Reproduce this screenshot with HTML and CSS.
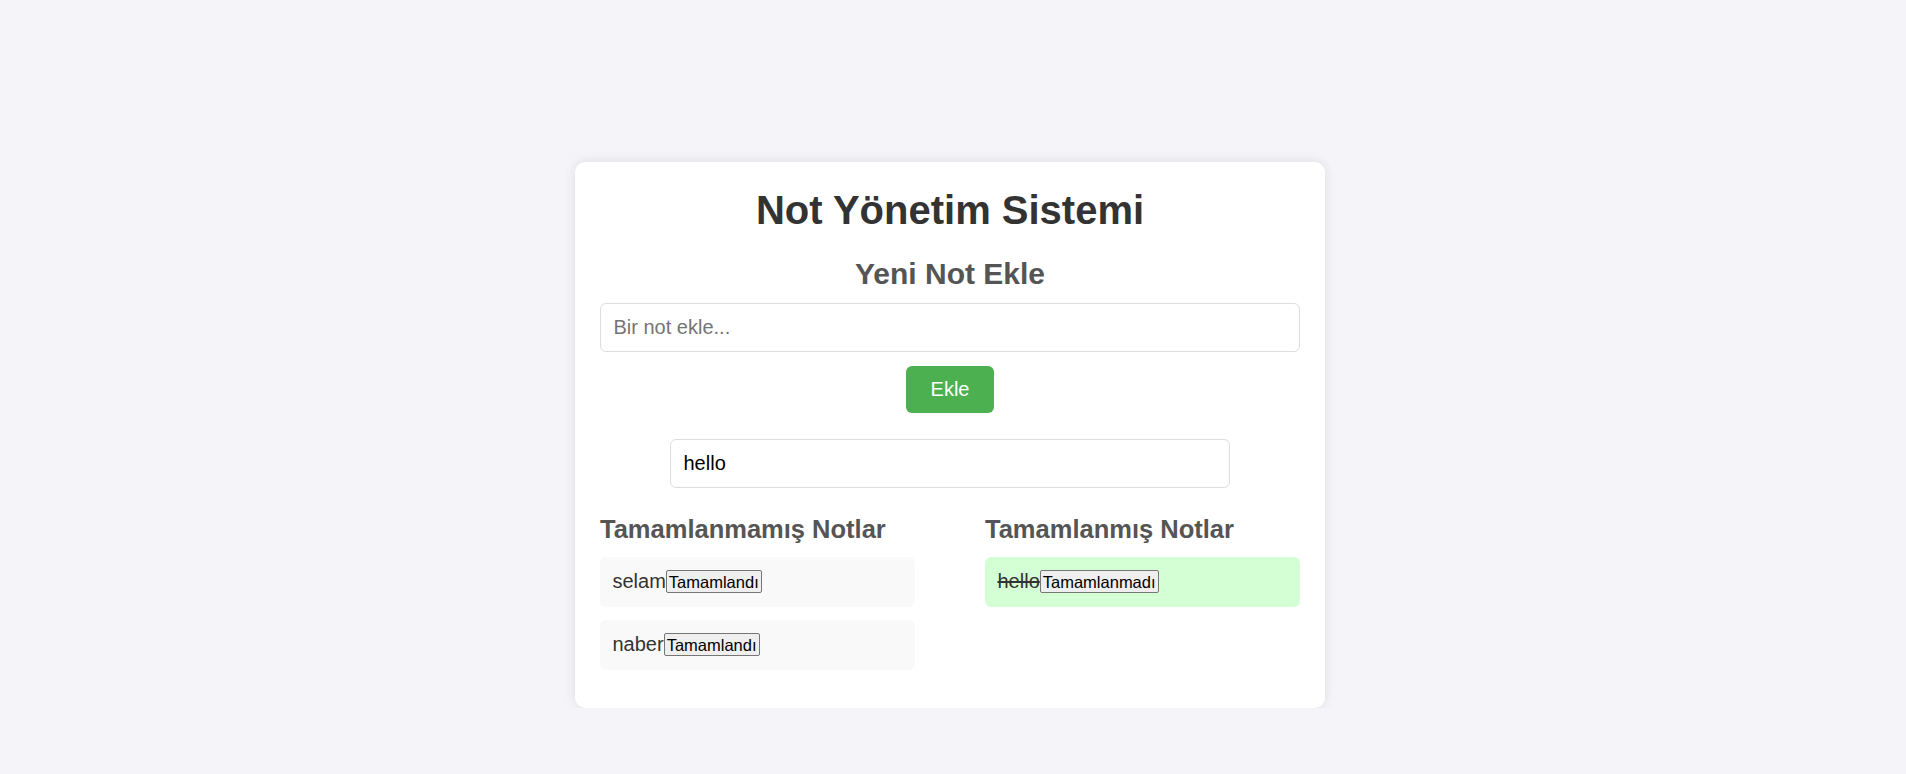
FILE: index.html
```html
<!DOCTYPE html>
<html lang="tr">
<head>
<meta charset="utf-8">
<title>Not Yönetim Sistemi</title>
<link rel="stylesheet" href="styles.css">
</head>
<body>
<div class="page">
  <div class="card">
    <h1 class="title">Not Yönetim Sistemi</h1>
    <h2 class="subtitle">Yeni Not Ekle</h2>
    <input class="note-input" type="text" placeholder="Bir not ekle...">
    <div class="btn-row"><button class="add-btn">Ekle</button></div>
    <div class="search-row"><input class="search-input" type="text" value="hello"></div>
    <div class="columns">
      <div class="col">
        <h3 class="col-title">Tamamlanmamış Notlar</h3>
        <div class="note"><span class="note-text">selam</span><button class="toggle">Tamamlandı</button></div>
        <div class="note"><span class="note-text">naber</span><button class="toggle">Tamamlandı</button></div>
      </div>
      <div class="col">
        <h3 class="col-title">Tamamlanmış Notlar</h3>
        <div class="note done"><span class="note-text">hello</span><button class="toggle">Tamamlanmadı</button></div>
      </div>
    </div>
  </div>
</div>
</body>
</html>
```
FILE: styles.css
```css
html, body {
  margin: 0;
  padding: 0;
  background: #f4f4f9;
  font-family: "Liberation Sans", Arial, sans-serif;
}

.page {
  display: flex;
  justify-content: center;
  align-items: flex-start;
  padding: 162px 6px 0 0;
}

.card {
  width: 750px;
  box-sizing: border-box;
  padding: 25px;
  background: #fff;
  border-radius: 10px;
  box-shadow: 0 0 12px rgba(0, 0, 0, 0.1);
}

.title {
  margin: 0 0 24px;
  font-size: 40px;
  line-height: 46px;
  font-weight: bold;
  color: #333;
  text-align: center;
}

.subtitle {
  margin: 0 0 12px;
  font-size: 30px;
  line-height: 34px;
  font-weight: bold;
  color: #555;
  text-align: center;
}

.note-input,
.search-input {
  display: block;
  box-sizing: border-box;
  height: 49px;
  padding: 0 12.5px;
  border: 1px solid #ddd;
  border-radius: 6px;
  font-family: "Liberation Sans", Arial, sans-serif;
  font-size: 20px;
  color: #000;
  background: #fff;
  outline: none;
}

.note-input {
  width: 100%;
}

.note-input::placeholder {
  color: #757575;
}

.btn-row {
  display: flex;
  justify-content: center;
  margin-top: 14px;
}

.add-btn {
  height: 47px;
  padding: 0 25px;
  border: none;
  border-radius: 6px;
  background: #4caf50;
  color: #fff;
  font-family: "Liberation Sans", Arial, sans-serif;
  font-size: 20px;
}

.search-row {
  display: flex;
  justify-content: center;
  margin-top: 26px;
}

.search-input {
  width: 560px;
}

.columns {
  display: flex;
  justify-content: space-between;
  margin-top: 27px;
}

.col {
  width: 315px;
}

.col-title {
  margin: 0 0 12.5px;
  font-size: 25.5px;
  line-height: 29px;
  font-weight: bold;
  color: #555;
}

.note {
  box-sizing: border-box;
  height: 50px;
  margin-bottom: 13px;
  padding: 0 12.5px;
  display: flex;
  align-items: center;
  background: #f9f9f9;
  border-radius: 6px;
  font-size: 20px;
  color: #333;
}

.note.done {
  background: #d4ffd4;
}

.note.done .note-text {
  text-decoration: line-through;
}

.toggle {
  height: 23px;
  padding: 0 2px;
  border: 1px solid #767676;
  border-radius: 2px;
  background: #efefef;
  color: #000;
  font-family: "Liberation Sans", Arial, sans-serif;
  font-size: 16.5px;
  line-height: 20px;
}
```
